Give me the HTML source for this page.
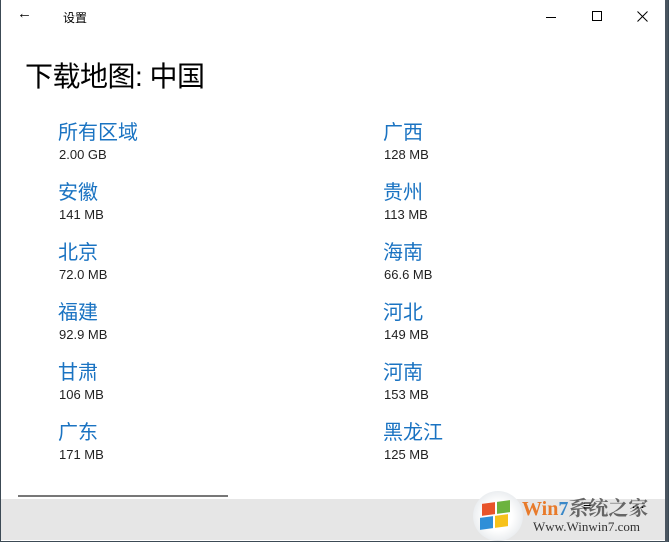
<!DOCTYPE html>
<html><head><meta charset="utf-8"><style>
*{margin:0;padding:0;box-sizing:border-box}
html,body{width:669px;height:542px;overflow:hidden;background:#fff;font-family:"Liberation Sans","Noto Sans CJK SC",sans-serif}
.win{position:absolute;left:0;top:0;width:669px;height:542px;border:1px solid #3c4a55;border-top:0;background:#fff}
.rb{position:absolute;right:0;top:0;width:3px;height:542px;background:#4a5560}
.title{position:absolute;left:62px;top:9px;font-size:12px;color:#000}
.back{position:absolute;left:16px;top:5px;font-size:15px;color:#000}
h1{position:absolute;left:24px;top:55px;font-size:28px;font-weight:normal;color:#000;letter-spacing:-0.5px}
.it{position:absolute}
.n{font-size:20px;color:#1a73c2;line-height:30px;margin-left:-1px}
.s{font-size:13px;color:#222;line-height:14px}
.bar{position:absolute;left:0;top:499px;width:666px;height:41px;background:#e6e6e6}
.sc{position:absolute;left:17px;top:495px;width:210px;height:2px;background:#777}
.nw{white-space:nowrap}
</style></head><body>
<div class="win">
<div class="back">←</div>
<div class="title">设置</div>
<div style="position:absolute;left:545px;top:17px;width:10px;height:1px;background:#000"></div>
<div style="position:absolute;left:591px;top:11px;width:10px;height:10px;border:1px solid #000"></div>
<svg style="position:absolute;left:636px;top:11px" width="11" height="11"><path d="M0.5 0.5L10.5 10.5M10.5 0.5L0.5 10.5" stroke="#000" stroke-width="1"/></svg>
<h1>下载地图: 中国</h1>

<div class="it" style="left:58px;top:118px"><div class="n">所有区域</div><div class="s">2.00 GB</div></div>
<div class="it" style="left:58px;top:178px"><div class="n">安徽</div><div class="s">141 MB</div></div>
<div class="it" style="left:58px;top:238px"><div class="n">北京</div><div class="s">72.0 MB</div></div>
<div class="it" style="left:58px;top:298px"><div class="n">福建</div><div class="s">92.9 MB</div></div>
<div class="it" style="left:58px;top:358px"><div class="n">甘肃</div><div class="s">106 MB</div></div>
<div class="it" style="left:58px;top:418px"><div class="n">广东</div><div class="s">171 MB</div></div>

<div class="it" style="left:383px;top:118px"><div class="n">广西</div><div class="s">128 MB</div></div>
<div class="it" style="left:383px;top:178px"><div class="n">贵州</div><div class="s">113 MB</div></div>
<div class="it" style="left:383px;top:238px"><div class="n">海南</div><div class="s">66.6 MB</div></div>
<div class="it" style="left:383px;top:298px"><div class="n">河北</div><div class="s">149 MB</div></div>
<div class="it" style="left:383px;top:358px"><div class="n">河南</div><div class="s">153 MB</div></div>
<div class="it" style="left:383px;top:418px"><div class="n">黑龙江</div><div class="s">125 MB</div></div>

<div class="sc"></div>
<div class="bar">
 <div style="position:absolute;left:472px;top:-8px;width:50px;height:50px;border-radius:50%;background:radial-gradient(circle,#fff 40%,#d8dde2 100%)"></div>
 <div style="position:absolute;left:481px;top:4px;width:13px;height:12px;background:#e8542a;transform:skewY(-8deg)"></div>
 <div style="position:absolute;left:496px;top:2px;width:13px;height:12px;background:#6cb33e;transform:skewY(-8deg)"></div>
 <div style="position:absolute;left:479px;top:18px;width:13px;height:12px;background:#2f8fd8;transform:skewY(-8deg)"></div>
 <div style="position:absolute;left:494px;top:16px;width:13px;height:12px;background:#f7c21b;transform:skewY(-8deg)"></div>
 <div class="nw" style="position:absolute;left:521px;top:-7px;font-size:20px;font-weight:bold;color:#e87a2a;font-family:'Liberation Serif','Noto Serif CJK SC',serif">Win<span style="color:#3a88c8">7</span><span style="color:#666">系统之家</span></div>
 <div class="nw" style="position:absolute;left:532px;top:20px;font-size:13px;color:#333;font-family:'Liberation Serif',serif">Www.Winwin7.com</div>
 <div style="position:absolute;left:582px;top:-2px;font-size:14px;color:#000">≡</div>
 <div style="position:absolute;left:630px;top:-4px;font-size:14px;color:#000">…</div>
</div>
<div class="rb"></div>
</div>
</body></html>
